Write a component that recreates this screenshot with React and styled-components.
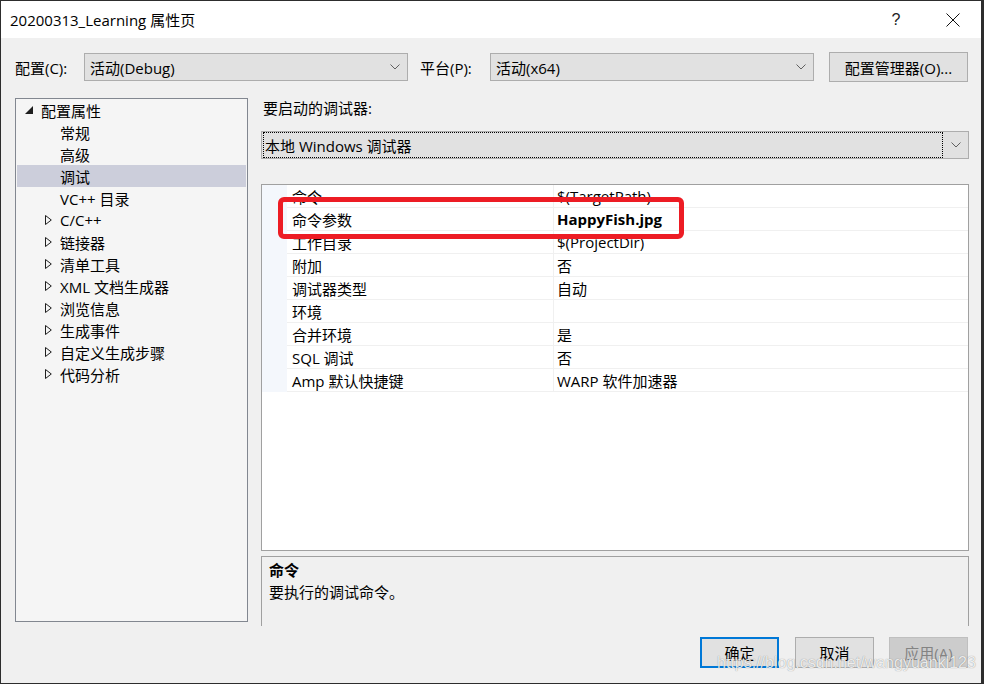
import React from "react";
import styled, { createGlobalStyle } from "styled-components";

const Global = createGlobalStyle`
  html, body { margin: 0; padding: 0; background: #2b2b2b; }
  body {
    font-family: "Open Sans", "Noto Sans CJK SC", sans-serif;
    font-size: 15px;
    color: #000;
  }
  * { box-sizing: border-box; }
`;

const FONT = `"Open Sans", "Noto Sans CJK SC", sans-serif`;

const Window = styled.div`
  position: relative;
  width: 984px;
  height: 684px;
  border: 1px solid #2d2d2d;
  border-right-width: 3px;
  background: #f0f0f0;
  display: flex;
  flex-direction: column;
  overflow: hidden;
  font-family: ${FONT};
`;

const TitleBar = styled.div`
  height: 37px;
  flex: none;
  background: #fff;
  display: flex;
  align-items: center;
  padding-left: 9px;
  padding-right: 5px;
`;

const Title = styled.div`
  flex: 1;
  font-size: 15px;
  line-height: 20px;
  margin-top: 1px;
`;

const TitleBtn = styled.div`
  width: 46px;
  height: 37px;
  margin-left: ${(p) => p.$ml || 0}px;
  display: flex;
  align-items: center;
  justify-content: center;
  font-size: 16px;
  color: #222;
  font-family: "Liberation Sans", sans-serif;
`;

const Body = styled.div`
  flex: 1;
  display: flex;
  flex-direction: column;
  padding: 14px 13px 0 14px;
`;

const ConfigRow = styled.div`
  display: flex;
  align-items: center;
  height: 30px;
`;

const Label = styled.div`
  width: ${(p) => p.$w}px;
  margin-left: ${(p) => p.$ml || 0}px;
  font-size: 15px;
  white-space: nowrap;
`;

const Select = styled.div`
  position: relative;
  width: ${(p) => (p.$w ? `${p.$w}px` : "auto")};
  height: ${(p) => p.$h || 28}px;
  background: #e1e1e1;
  border: 1px solid #adadad;
  display: flex;
  align-items: center;
  padding-left: 3px;
  font-size: 15px;
  white-space: nowrap;
`;

const SelectText = styled.div`
  flex: 1;
  height: 100%;
  display: flex;
  align-items: center;
  border: 1px ${(p) => (p.$focus ? "dotted #000" : "solid transparent")};
  margin: ${(p) => (p.$focus ? "1px 0" : "0")};
  padding-left: 1px;
`;

const Chevron = styled.div`
  width: 25px;
  flex: none;
  display: flex;
  align-items: center;
  justify-content: center;
`;

const Button = styled.div`
  width: ${(p) => p.$w || 79}px;
  height: ${(p) => p.$h || 31}px;
  margin-left: ${(p) => p.$ml || 0}px;
  display: flex;
  align-items: center;
  justify-content: center;
  font-size: 15px;
  background: ${(p) => (p.$disabled ? "#cccccc" : "#e1e1e1")};
  color: ${(p) => (p.$disabled ? "#838383" : "#000")};
  border: ${(p) =>
    p.$default ? "2px solid #0078d7" : p.$disabled ? "1px solid #bfbfbf" : "1px solid #adadad"};
  white-space: nowrap;
`;

const Main = styled.div`
  margin-top: 16px;
  display: grid;
  grid-template-columns: 233px 708px;
  column-gap: 13px;
  height: 527px;
`;

const Tree = styled.div`
  height: 524px;
  border: 1px solid #828790;
  background: #f5f5f5;
  padding: 0 1px;
`;

const TreeRow = styled.div`
  height: 22px;
  display: flex;
  align-items: center;
  background: ${(p) => (p.$selected ? "#cccedb" : "transparent")};
  font-size: 15px;
  white-space: nowrap;
`;

const Expander = styled.div`
  width: ${(p) => p.$w}px;
  flex: none;
  display: flex;
  align-items: center;
  justify-content: flex-end;
  padding-right: ${(p) => p.$pr || 0}px;
`;

const RightCol = styled.div`
  display: flex;
  flex-direction: column;
`;

const SectionLabel = styled.div`
  height: 20px;
  line-height: 20px;
  padding-left: 2px;
  font-size: 15px;
`;

const DebuggerSelect = styled(Select)`
  margin-top: 13px;
  padding-left: 1px;
`;

const GridWrap = styled.div`
  position: relative;
  margin-top: 25px;
  height: 367px;
  border: 1px solid #a0a0a0;
  background: #fff;
`;

const PropRow = styled.div`
  display: grid;
  grid-template-columns: 25px 267px 1fr;
  height: 23px;
  font-size: 15px;
`;

const Margin = styled.div`
  background: #f4f7fc;
`;

const Cell = styled.div`
  display: flex;
  align-items: center;
  padding-left: ${(p) => p.$pl}px;
  border-bottom: 1px solid #f0f0f0;
  border-right: ${(p) => (p.$divider ? "1px solid #f0f0f0" : "none")};
  font-weight: ${(p) => (p.$bold ? 700 : 400)};
  white-space: nowrap;
`;

const Highlight = styled.div`
  position: absolute;
  left: 16px;
  top: 12px;
  width: 406px;
  height: 42px;
  border: 5px solid #ed1c24;
  border-radius: 6px;
  pointer-events: none;
`;

const Desc = styled.div`
  margin-top: 5px;
  height: 70px;
  border: 1px solid #a0a0a0;
  border-bottom: none;
  background: #f0f0f0;
  padding: 2px 7px;
  font-size: 15px;
`;

const DescTitle = styled.div`
  font-weight: 700;
  line-height: 22px;
`;

const DescText = styled.div`
  line-height: 22px;
`;

const Footer = styled.div`
  margin-top: 12px;
  display: flex;
  justify-content: flex-end;
`;

const Watermark = styled.div`
  position: absolute;
  left: 716px;
  top: 653px;
  font-family: "Liberation Sans", Arial, sans-serif;
  font-size: 16px;
  color: rgba(255, 255, 255, 0.85);
  text-shadow: 0 0 1px rgba(0, 0, 0, 0.45);
  pointer-events: none;
  white-space: nowrap;
`;

const ChevronIcon = () => (
  <svg width="10" height="6" viewBox="0 0 10 6">
    <polyline points="0.5,0.5 5,5 9.5,0.5" fill="none" stroke="#606060" strokeWidth="1" />
  </svg>
);

const ExpandedIcon = () => (
  <svg width="8" height="8" viewBox="0 0 8 8">
    <polygon points="8,0 8,8 0,8" fill="#1e1e1e" />
  </svg>
);

const CollapsedIcon = () => (
  <svg width="7" height="10" viewBox="0 0 7 10">
    <polygon points="0.5,0.5 6.3,5 0.5,9.5" fill="none" stroke="#1e1e1e" strokeWidth="1" />
  </svg>
);

const CloseIcon = () => (
  <svg width="14" height="14" viewBox="0 0 14 14">
    <path d="M0.5 0.5 L13.5 13.5 M13.5 0.5 L0.5 13.5" stroke="#111" strokeWidth="1" />
  </svg>
);

const treeItems = [
  { text: "配置属性", type: "root" },
  { text: "常规", type: "leaf" },
  { text: "高级", type: "leaf" },
  { text: "调试", type: "leaf", selected: true },
  { text: "VC++ 目录", type: "leaf" },
  { text: "C/C++", type: "branch" },
  { text: "链接器", type: "branch" },
  { text: "清单工具", type: "branch" },
  { text: "XML 文档生成器", type: "branch" },
  { text: "浏览信息", type: "branch" },
  { text: "生成事件", type: "branch" },
  { text: "自定义生成步骤", type: "branch" },
  { text: "代码分析", type: "branch" },
];

const props = [
  ["命令", "$(TargetPath)"],
  ["命令参数", "HappyFish.jpg", true],
  ["工作目录", "$(ProjectDir)"],
  ["附加", "否"],
  ["调试器类型", "自动"],
  ["环境", ""],
  ["合并环境", "是"],
  ["SQL 调试", "否"],
  ["Amp 默认快捷键", "WARP 软件加速器"],
];

export default function App() {
  return (
    <>
      <Global />
      <Window>
        <TitleBar>
          <Title>20200313_Learning 属性页</Title>
          <TitleBtn>?</TitleBtn>
          <TitleBtn $ml={11}>
            <CloseIcon />
          </TitleBtn>
        </TitleBar>
        <Body>
          <ConfigRow>
            <Label $w={69}>配置(C):</Label>
            <Select $w={324}>
              <SelectText>活动(Debug)</SelectText>
              <Chevron>
                <ChevronIcon />
              </Chevron>
            </Select>
            <Label $w={70} $ml={12}>
              平台(P):
            </Label>
            <Select $w={324}>
              <SelectText>活动(x64)</SelectText>
              <Chevron>
                <ChevronIcon />
              </Chevron>
            </Select>
            <Button $w={139} $h={30} $ml={15}>
              配置管理器(O)...
            </Button>
          </ConfigRow>
          <Main>
            <Tree>
              {treeItems.map((it) => (
                <TreeRow key={it.text} $selected={it.selected}>
                  {it.type === "root" && (
                    <Expander $w={24} $pr={8}>
                      <ExpandedIcon />
                    </Expander>
                  )}
                  {it.type === "branch" && (
                    <Expander $w={43} $pr={8}>
                      <CollapsedIcon />
                    </Expander>
                  )}
                  {it.type === "leaf" && <Expander $w={43} />}
                  <span>{it.text}</span>
                </TreeRow>
              ))}
            </Tree>
            <RightCol>
              <SectionLabel>要启动的调试器:</SectionLabel>
              <DebuggerSelect $h={28}>
                <SelectText $focus>本地 Windows 调试器</SelectText>
                <Chevron>
                  <ChevronIcon />
                </Chevron>
              </DebuggerSelect>
              <GridWrap>
                {props.map(([k, v, bold]) => (
                  <PropRow key={k}>
                    <Margin />
                    <Cell $pl={5} $divider>
                      {k}
                    </Cell>
                    <Cell $pl={3} $bold={bold}>
                      {v}
                    </Cell>
                  </PropRow>
                ))}
                <Highlight />
              </GridWrap>
              <Desc>
                <DescTitle>命令</DescTitle>
                <DescText>要执行的调试命令。</DescText>
              </Desc>
            </RightCol>
          </Main>
          <Footer>
            <Button $default>确定</Button>
            <Button $ml={16}>取消</Button>
            <Button $ml={15} $disabled>
              应用(A)
            </Button>
          </Footer>
        </Body>
        <Watermark>https://blog.csdn.net/wangyuankl123</Watermark>
      </Window>
    </>
  );
}
